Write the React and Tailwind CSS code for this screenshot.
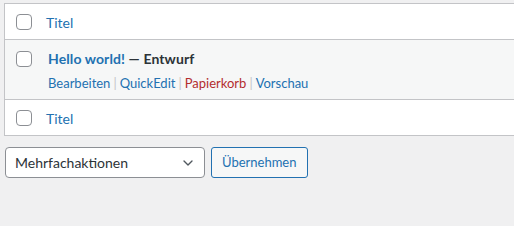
import { ChevronDown } from "lucide-react";

const font = { fontFamily: 'Lato, "Open Sans", sans-serif' };

function Check() {
  return <span className="block h-4 w-4 shrink-0 rounded-[4px] border border-[#8c8f94] bg-white" />;
}

function Sep() {
  return <span className="px-[3px] text-[#c3c4c7]">|</span>;
}

export default function App() {
  return (
    <div className="h-[226px] w-[514px] overflow-hidden bg-[#f0f0f1] pt-[3px] pl-[4px] text-[13px] text-[#1d2327]" style={font}>
      {/* table */}
      <div className="w-[530px] border border-[#c3c4c7] bg-white">
        <div className="flex h-[36px] items-center border-b border-[#c3c4c7]">
          <div className="flex w-[41px] justify-end pr-[14px]"><Check /></div>
          <span className="pt-[2px] text-[14px] text-[#2271b1]">Titel</span>
        </div>
        <div className="flex h-[60px] items-start border-b border-[#c3c4c7] bg-[#f6f7f7]">
          <div className="flex w-[41px] justify-end pr-[14px] pt-[11px]"><Check /></div>
          <div className="pt-[9px] pl-[2px]">
            <div className="text-[14px] leading-[20px] font-bold tracking-[0.1px]">
              <span className="text-[#2271b1]">Hello world!</span>
              <span className="text-[#2c3338]"> — Entwurf</span>
            </div>
            <div className="mt-[5px] text-[13px] leading-[18px] text-[#2271b1]">
              <span>Bearbeiten</span>
              <Sep />
              <span>QuickEdit</span>
              <Sep />
              <span className="text-[#b32d2e]">Papierkorb</span>
              <Sep />
              <span>Vorschau</span>
            </div>
          </div>
        </div>
        <div className="flex h-[35px] items-center">
          <div className="flex w-[41px] justify-end pr-[14px]"><Check /></div>
          <span className="pt-[2px] text-[14px] text-[#2271b1]">Titel</span>
        </div>
      </div>

      {/* bulk actions */}
      <div className="mt-[11px] ml-[1px] flex gap-[6px]">
        <div className="flex h-[31px] w-[200px] items-center justify-between rounded-[4px] border border-[#8c8f94] bg-white pr-[8px] pl-[9px] text-[14px] text-[#2c3338]">
          <span>Mehrfachaktionen</span>
          <ChevronDown size={16} strokeWidth={2} className="text-[#50575e]" />
        </div>
        <button className="h-[31px] rounded-[3px] border border-[#2271b1] bg-[#f6f7f7] px-[10px] text-[13px] text-[#2271b1]">
          Übernehmen
        </button>
      </div>
    </div>
  );
}
